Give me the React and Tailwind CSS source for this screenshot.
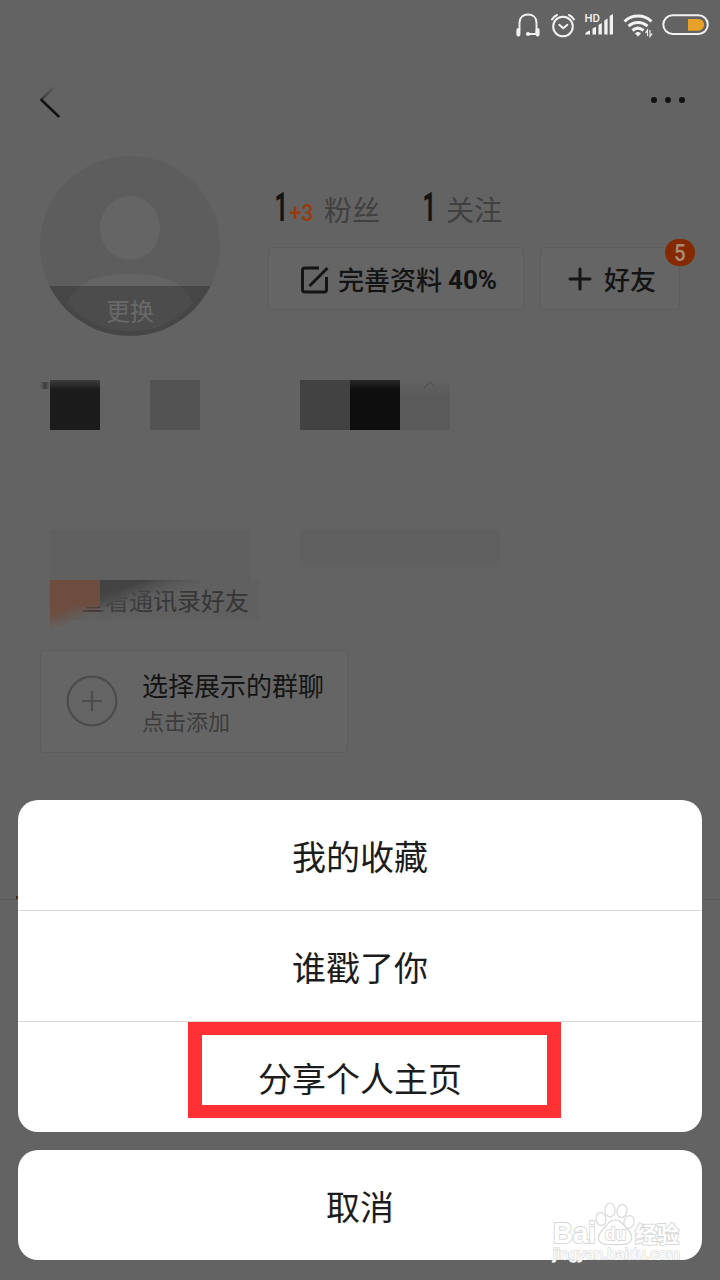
import React from 'react';

const HeadsetIcon = () => (
    <svg width="26" height="26" viewBox="0 0 26 26" fill="none" stroke="#f2f2f2" strokeWidth="1.900">
        <path d="M4.500 18V10.500C4.500 5.500 8 2.500 13 2.500s8.500 3 8.500 8V22H13.500" />
        <path d="M3.400 18v4.500M22.600 18v4.500" strokeWidth="4" strokeLinecap="round" />
        <circle cx="13" cy="22" r="2.100" fill="#f2f2f2" stroke="none" />
    </svg>
);

const AlarmIcon = () => (
    <svg width="26" height="26" viewBox="0 0 26 26" fill="none" stroke="#f2f2f2" strokeWidth="2" strokeLinecap="round">
        <circle cx="13" cy="14.500" r="9.800" />
        <path d="M9.300 12.800l3.900 3.500 4.200-3.500M2 7.500C3.200 5.500 5 4 7 3M24 7.500C22.800 5.500 21 4 19 3" />
    </svg>
);

const SignalIcon = () => (
    <svg width="32" height="26" viewBox="0 0 32 26" fill="#f2f2f2">
        <text x="0.500" y="9.500" fontSize="11" fontWeight="500" fontFamily="Roboto, sans-serif" textLength="15.500" lengthAdjust="spacingAndGlyphs">HD</text>
        <path d="M1 22.500c0-1.500 2-3 5-4v4zM8.500 16.500l3.500-1.800v7.800H8.500zM14.500 13l3.300-2v11.500h-3.300zM20.300 8.500l3.300-2v16h-3.300zM25.700 4l3.300-2v20.500h-3.300z" />
    </svg>
);

const WifiIcon = () => (
    <svg width="30" height="26" viewBox="0 0 30 26" fill="none" stroke="#f2f2f2" strokeWidth="3">
        <path d="M1.500 9.500c7.500-7.200 19.500-7.200 27 0M5.500 14.200c5.500-5 13.500-5 19 0M9.500 18.500c3.400-2.900 7.600-2.900 11 0" />
        <path d="M15 24.500l-3-3c1.500-2 4.500-2 6 0z" fill="#f2f2f2" stroke="none" />
        <path d="M24.500 24v-6l-2 3M27 18v6.500l2.200-3" strokeWidth="1.200" />
    </svg>
);

const BatteryIcon = () => (
    <svg width="48" height="22" viewBox="0 0 48 22">
        <rect x="1.300" y="1.300" width="44.500" height="18.600" rx="9.300" fill="none" stroke="#f2f2f2" strokeWidth="2" />
        <path d="M26 5h9.500c3 0 6.500 1.500 6.500 5.800s-3.500 6-6.500 6H26z" fill="#e8a22a" />
    </svg>
);

const Avatar = () => (
    <svg width="180" height="180" viewBox="0 0 180 180">
        <defs>
            <clipPath id="avatar">
                <circle cx="90" cy="90" r="90" />
            </clipPath>
        </defs>
        <g clipPath="url(#avatar)">
            <rect width="180" height="180" fill="#5d5d5d" />
            <ellipse cx="90" cy="72" rx="30" ry="32" fill="#656565" />
            <path d="M27 147C36 127 53 118 90 118s54 9 63 29c-17 18-34 28-63 28s-46-10-63-28z" fill="#646464" />
            <rect y="130" width="180" height="50" fill="#000" fillOpacity="0.240" />
        </g>
        <text x="90" y="164" textAnchor="middle" fontSize="24" fill="#696969" fontFamily="'Noto Sans CJK SC', sans-serif">更换</text>
    </svg>
);

const Watermark = () => (
    <svg width="136" height="62" viewBox="0 0 136 62" fill="#fff" stroke="#d8d8d8" fontFamily="'Liberation Sans', 'Noto Sans CJK SC', sans-serif">
        <g fontWeight="700" strokeWidth="2" paintOrder="stroke">
            <text x="4" y="41" fontSize="29" textLength="43" lengthAdjust="spacingAndGlyphs">Bai</text>
            <text x="86" y="40" fontSize="22" textLength="44" lengthAdjust="spacingAndGlyphs">经验</text>
        </g>
        <g strokeWidth="1.200">
            <ellipse cx="52" cy="17" rx="5" ry="6.500" transform="rotate(-12 52 17)" />
            <ellipse cx="61" cy="8" rx="5" ry="7" />
            <ellipse cx="73" cy="9" rx="5" ry="6.500" transform="rotate(12 73 9)" />
            <ellipse cx="80" cy="20" rx="5" ry="6.500" transform="rotate(15 80 20)" />
            <path d="M66 18c6 0 8.500 5 12 9 4 3.500 6 7 4 11.500-2.500 5-8 4-16 4s-14 1-16-4c-2-4.500 1-8 4.500-11.500 3.500-4 5.500-9 11.500-9z" />
        </g>
        <text x="56" y="38" fontSize="19" fontWeight="700" strokeWidth="1.800" paintOrder="stroke" textLength="21" lengthAdjust="spacingAndGlyphs">du</text>
        <text x="4" y="57" fontSize="14" stroke="#dedede" strokeWidth="1.400" paintOrder="stroke" textLength="127" lengthAdjust="spacingAndGlyphs">jingyan.baidu.com</text>
    </svg>
);

const StatusBar = () => (
    <div className="flex h-[50px] items-center justify-end pr-[10px]">
        <HeadsetIcon />
        <div className="ml-[9px]"><AlarmIcon /></div>
        <div className="ml-2"><SignalIcon /></div>
        <div className="ml-[7px]"><WifiIcon /></div>
        <div className="ml-[9px]"><BatteryIcon /></div>
    </div>
);

const NavBar = () => (
    <div className="flex h-[106px] items-start justify-between pt-[34px] pl-[38px] pr-[35px]">
        <svg width="26" height="36" viewBox="0 0 26 36" fill="none" strokeWidth="2.600">
            <defs>
                <linearGradient id="arrow" x1="0" y1="0" x2="0" y2="20" gradientUnits="userSpaceOnUse">
                    <stop offset="0.100" stopColor="#111" stopOpacity="0" />
                    <stop offset="1" stopColor="#111" stopOpacity="0.650" />
                </linearGradient>
            </defs>
            <path d="M17.500 1.500L3 16" stroke="url(#arrow)" />
            <path d="M3.500 16L20.500 32.300" stroke="#141414" strokeLinecap="round" />
        </svg>
        <div className="mt-[13px] flex gap-2">
            <span className="size-[6px] rounded-full bg-[#111]" />
            <span className="size-[6px] rounded-full bg-[#111]" />
            <span className="size-[6px] rounded-full bg-[#111]" />
        </div>
    </div>
);

const Stats = () => (
    <svg width="260" height="91" viewBox="0 0 260 91" fontFamily="Roboto, sans-serif">
        <g fontWeight="700" fill="#141414" fontSize="41">
            <text x="6.500" y="65" textLength="13.500" lengthAdjust="spacingAndGlyphs">1</text>
            <text x="154.500" y="65" textLength="13.500" lengthAdjust="spacingAndGlyphs">1</text>
        </g>
        <text x="21.500" y="65" fontSize="24" fontWeight="500" fill="#983b0c" textLength="24" lengthAdjust="spacingAndGlyphs">+3</text>
        <g fontSize="28" fill="#404040" fontFamily="'Noto Sans CJK SC', sans-serif">
            <text x="56" y="65">粉丝</text>
            <text x="178" y="65">关注</text>
        </g>
    </svg>
);

const Profile = () => (
    <div className="flex h-[180px] pl-10">
        <Avatar />
        <div className="ml-12 flex flex-col">
            <Stats />
            <div className="flex gap-4">
                <button className="flex h-[63px] w-[256px] items-center rounded-[4px] border border-[#5c5c5c] bg-[#656565] pl-8 text-[26px] font-bold text-[#141414]">
                    <svg className="mt-[2px]" width="28" height="28" viewBox="0 0 28 28" fill="none" stroke="#141414" strokeWidth="3">
                        <path d="M18 2H4Q1.500 2 1.500 4.500v19Q1.500 26 4 26h19q2.500 0 2.500-2.500V11M8.500 20L26.500 2" />
                    </svg>
                    <span className="ml-[9px] whitespace-nowrap font-medium">完善资料</span>
                    <span className="mt-[3px] ml-[6px] font-[Roboto]">40%</span>
                </button>
                <button className="relative flex h-[63px] w-[140px] items-center rounded-[4px] border border-[#5c5c5c] bg-[#656565] pl-[27px] text-[26px] font-medium text-[#141414]">
                    <svg width="24" height="24" viewBox="0 0 24 24" stroke="#141414" strokeWidth="3" strokeLinecap="round">
                        <path d="M12 2v20M2 12h20" />
                    </svg>
                    <span className="ml-3 whitespace-nowrap">好友</span>
                    <span className="absolute -top-[9px] -right-[16px] flex h-[27px] w-[30px] items-center justify-center rounded-full bg-[#852900] font-[Roboto] text-[24px] leading-none text-[#aa8b7c]">
                        <span className="scale-x-85">5</span>
                    </span>
                </button>
            </div>
        </div>
    </div>
);

const Mosaic = () => (
    <div className="mt-11 flex h-[50px] pl-10">
        <span className="mt-[2px] h-[7px] w-[10px] bg-linear-to-r from-[#636363] via-[#3d3d3d] to-[#636363]" />
        <span className="size-[50px] bg-linear-to-b from-[#3c3c3c] via-[#1b1b1b] via-20% to-[#1b1b1b]" />
        <span className="ml-[50px] size-[50px] bg-[#535353]" />
        <span className="ml-[100px] size-[50px] bg-[#424242]" />
        <span className="size-[50px] bg-linear-to-b from-[#272727] via-[#0e0e0e] via-20% to-[#0e0e0e]" />
        <span className="size-[50px] bg-linear-to-b from-[#626262] via-[#5a5a5a] via-30% to-[#5a5a5a]">
            <svg width="50" height="50" viewBox="0 0 50 50" fill="none" stroke="#4c4c4c">
                <path d="M24 8l6-6 5 5" />
            </svg>
        </span>
    </div>
);

const Contacts = () => (
    <div className="mt-[100px] pl-[50px]">
        <div className="flex h-[50px] gap-[50px]">
            <span className="h-[50px] w-[200px] bg-[#606060]" />
            <span className="h-[40px] w-[200px] bg-linear-to-b from-[#5f5f5f] from-70% to-[#626262]" />
        </div>
        <div className="relative flex h-[40px] w-[209px] items-center bg-[#606060] pl-[31px] text-[24px] whitespace-nowrap text-[#353535]">
            查看通讯录好友
            <svg className="absolute top-0 left-0" width="152" height="52" viewBox="0 0 152 52">
                <defs>
                    <linearGradient id="shade" x1="50" y1="0" x2="63" y2="39" gradientUnits="userSpaceOnUse">
                        <stop offset="0.350" stopColor="#434343" />
                        <stop offset="1" stopColor="#606060" stopOpacity="0" />
                    </linearGradient>
                    <linearGradient id="skin" x1="0" y1="0" x2="17" y2="45" gradientUnits="userSpaceOnUse">
                        <stop offset="0.650" stopColor="#6d4d3f" />
                        <stop offset="1" stopColor="#6d4d3f" stopOpacity="0" />
                    </linearGradient>
                </defs>
                <path d="M50 8h26v9L50 27z" fill="#525252" fillOpacity="0.850" />
                <path d="M50 0h100v10L50 42z" fill="url(#shade)" />
                <path d="M30 8h20v18L30 27z" fill="#6d4d3f" />
                <path d="M0 0h50v31L0 50z" fill="url(#skin)" />
            </svg>
        </div>
    </div>
);

const GroupCard = () => (
    <div className="mt-[30px] ml-10 flex h-[103px] w-[308px] items-center rounded-[4px] border border-[#5c5c5c] bg-[#656565] pl-[25px]">
        <svg className="-mt-[2px]" width="52" height="52" viewBox="0 0 52 52" fill="none" stroke="#4c4c4c" strokeWidth="2.200">
            <circle cx="26" cy="26" r="24.300" />
            <path d="M26 16v20M16 26h20" />
        </svg>
        <div className="ml-6 whitespace-nowrap">
            <div className="text-[26px] leading-[36px] text-[#141414]">选择展示的群聊</div>
            <div className="text-[22px] leading-[34px] text-[#3c3c3c]">点击添加</div>
        </div>
    </div>
);

const ActionSheet = () => (
    <div className="absolute inset-x-[18px] top-[800px] text-center text-[34px] text-[#1c1c1c]">
        <div className="overflow-hidden rounded-[20px] bg-white">
            <div className="flex h-[111px] items-center justify-center border-b border-[#d8d8d8]">我的收藏</div>
            <div className="flex h-[111px] items-center justify-center border-b border-[#d8d8d8]">谁戳了你</div>
            <div className="relative flex h-[110px] items-center justify-center">
                分享个人主页
                <span className="absolute top-0 left-[170px] h-[96px] w-[373px] border-[14px] border-t-[13px] border-b-[13px] border-[#ff3034]" />
            </div>
        </div>
        <div className="relative mt-[18px] flex h-[110px] items-center justify-center rounded-[20px] bg-white">
            取消
            <div className="absolute top-[52px] left-[531px]"><Watermark /></div>
        </div>
    </div>
);

const App = () => {
    return (
        <div className="relative h-[1280px] w-[720px] overflow-hidden bg-[#636363] font-['Noto_Sans_CJK_SC',sans-serif]">
            <StatusBar />
            <NavBar />
            <Profile />
            <Mosaic />
            <Contacts />
            <GroupCard />
            <div className="mt-[143px] flex h-[4px] items-start border-b border-[#5d5d5d] pl-4">
                <span className="h-[3px] w-[3px] bg-[#4a2517]" />
            </div>
            <ActionSheet />
        </div>
    );
};

export default App;
